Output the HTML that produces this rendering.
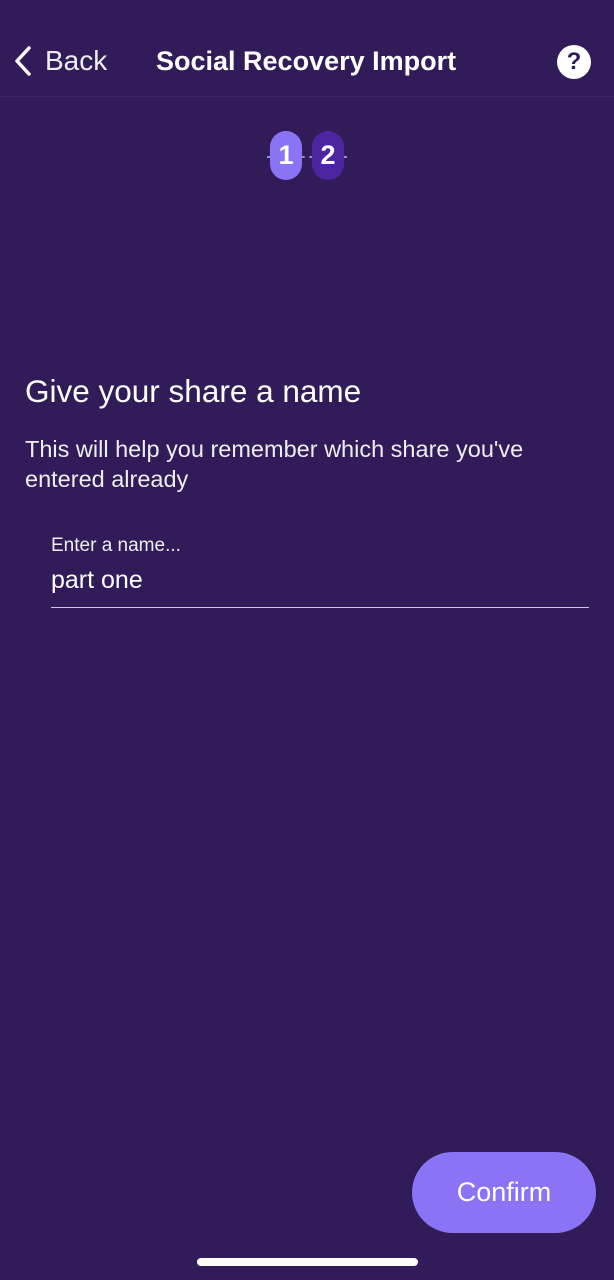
<!DOCTYPE html>
<html><head><style>
body{margin:0;width:614px;height:1280px;background:#311c59;font-family:"Liberation Sans",sans-serif;color:#fff;position:relative;overflow:hidden}
.a{position:absolute}
</style></head><body>
<svg class="a" style="left:10px;top:45px" width="24" height="32"><path d="M19 3 L7 16 L19 29" stroke="#fff" stroke-width="3.5" fill="none" stroke-linecap="round" stroke-linejoin="round"/></svg>
<div class="a" style="left:45px;top:45px;font-size:28px;color:#eee">Back</div>
<div class="a" style="left:156px;top:46px;font-size:27px;font-weight:bold">Social Recovery Import</div>
<div class="a" style="left:557px;top:45px;width:34px;height:34px;border-radius:50%;background:#fff;color:#311c59;font-weight:bold;font-size:24px;text-align:center;line-height:34px">?</div>
<div class="a" style="left:0;top:96px;width:614px;height:1px;background:#3b2765"></div>
<div class="a" style="left:267px;top:156px;width:80px;height:0;border-top:2px dashed #9a8bd0"></div>
<div class="a" style="left:270px;top:131px;width:32px;height:49px;border-radius:16px;background:#8a73f5;font-size:27px;font-weight:bold;text-align:center;line-height:49px">1</div>
<div class="a" style="left:312px;top:131px;width:32px;height:49px;border-radius:16px;background:#4b26a0;font-size:27px;font-weight:bold;text-align:center;line-height:49px">2</div>
<div class="a" style="left:25px;top:373px;font-size:31.5px">Give your share a name</div>
<div class="a" style="left:25px;top:434px;font-size:23.5px;line-height:30px;color:#eee;width:540px">This will help you remember which share you've entered already</div>
<div class="a" style="left:51px;top:535px;font-size:19px;color:#eee">Enter a name...</div>
<div class="a" style="left:51px;top:566px;font-size:25px">part one</div>
<div class="a" style="left:51px;top:607px;width:538px;height:1px;background:#cfc8e0"></div>
<div class="a" style="left:412px;top:1152px;width:184px;height:81px;border-radius:41px;background:#8a73f5;font-size:27px;text-align:center;line-height:81px">Confirm</div>
<div class="a" style="left:197px;top:1258px;width:221px;height:8px;border-radius:4px;background:#fff"></div>
</body></html>
